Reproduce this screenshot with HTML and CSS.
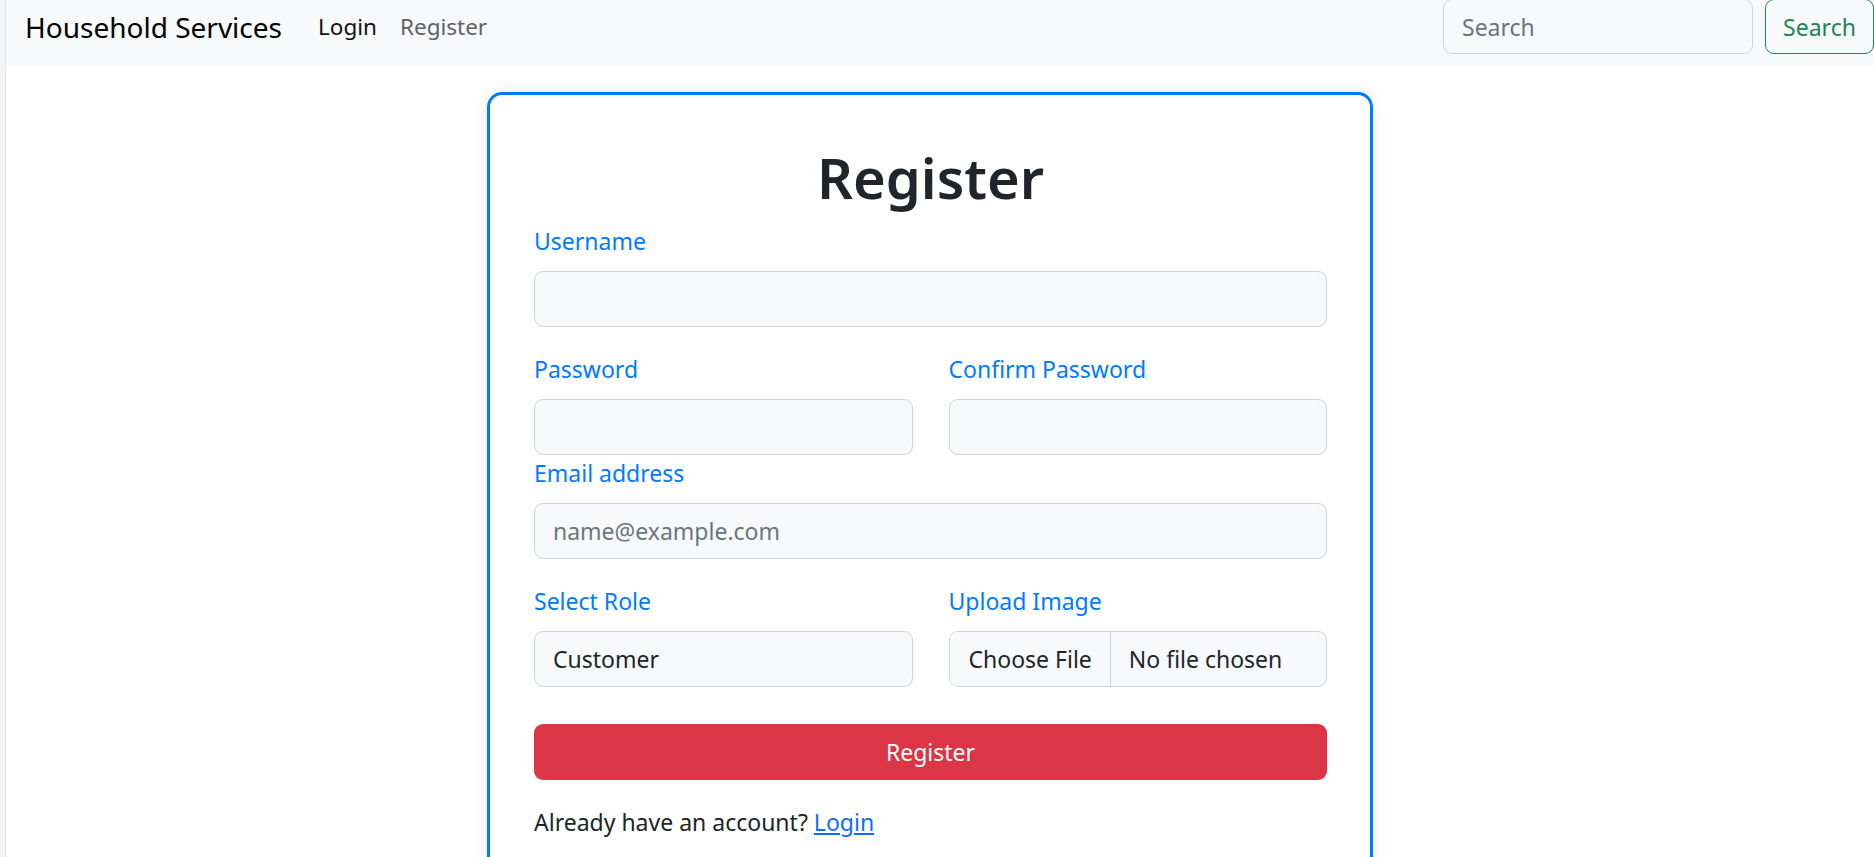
FILE: index.html
```html
<!DOCTYPE html>
<html lang="en">
<head>
<meta charset="utf-8">
<title>Register - Household Services</title>
<link rel="stylesheet" href="styles.css">
</head>
<body>
<nav class="navbar">
  <a class="brand" href="#">Household Services</a>
  <ul class="nav">
    <li><a class="nav-link active" href="#">Login</a></li>
    <li><a class="nav-link" href="#">Register</a></li>
  </ul>
  <form class="search">
    <input class="search-input" type="search" placeholder="Search">
    <button class="search-btn" type="button">Search</button>
  </form>
</nav>
<main class="main">
  <section class="card">
    <h1 class="title">Register</h1>
    <div class="group">
      <label class="label" for="username">Username</label>
      <input class="field" id="username" type="text">
    </div>
    <div class="row">
      <div class="col">
        <label class="label" for="password">Password</label>
        <input class="field" id="password" type="password">
      </div>
      <div class="col">
        <label class="label" for="confirm">Confirm Password</label>
        <input class="field" id="confirm" type="password">
      </div>
    </div>
    <div class="group">
      <label class="label" for="email">Email address</label>
      <input class="field" id="email" type="email" placeholder="name@example.com">
    </div>
    <div class="row row-last">
      <div class="col">
        <label class="label" for="role">Select Role</label>
        <select class="field select" id="role">
          <option>Customer</option>
          <option>Professional</option>
        </select>
      </div>
      <div class="col">
        <label class="label" for="image">Upload Image</label>
        <input class="field file" id="image" type="file">
      </div>
    </div>
    <button class="submit" type="button">Register</button>
    <p class="footer-text">Already have an account? <a class="link" href="#">Login</a></p>
  </section>
</main>
</body>
</html>
```
FILE: styles.css
```css
html {
  background: #f3f3f3;
}
body {
  margin: 0 0 0 5px;
  border-left: 1px solid #e3e3e3;
  background: #ffffff;
  min-height: 100vh;
  font-family: "Noto Sans", "Open Sans", sans-serif;
  font-size: 23px;
  line-height: 36px;
  color: #212529;
  overflow: hidden;
}
.navbar {
  display: flex;
  align-items: center;
  height: 53px;
  padding: 0 0 14px 19px;
  background: #f8f9fa;
}
.brand {
  font-size: 28px;
  line-height: 44px;
  color: #000000;
  text-decoration: none;
  margin-right: 24px;
}
.nav {
  display: flex;
  list-style: none;
  margin: 0;
  padding: 0;
  flex: 1;
}
.nav-link {
  display: block;
  padding: 0 11px 0 12px;
  font-size: 22.5px;
  color: #5f6265;
  text-decoration: none;
}
.nav-link.active {
  color: #111111;
}
.search {
  display: flex;
  gap: 12px;
  margin: 0;
}
.search-input {
  box-sizing: border-box;
  width: 310px;
  height: 55px;
  padding: 0 18px;
  border: 1px solid #ced4da;
  border-radius: 9px;
  background: #f8f9fa;
  font: inherit;
  font-size: 23px;
  color: #212529;
}
.search-input::placeholder {
  color: #6c757d;
}
.search-btn {
  box-sizing: border-box;
  width: 109px;
  height: 55px;
  padding: 0;
  border: 1px solid #198754;
  border-radius: 9px;
  background: transparent;
  font: inherit;
  font-size: 23px;
  color: #198754;
}
.main {
  display: flex;
  justify-content: center;
  padding-right: 20px;
  padding-top: 25px;
}
.card {
  box-sizing: border-box;
  width: 886px;
  padding: 48px 43px 40px 44px;
  border: 3px solid #007bff;
  border-radius: 15px;
  background: #fff;
  box-shadow: 0 0 16px rgba(0, 0, 0, 0.09);
}
.title {
  margin: 0 0 12px;
  text-align: center;
  font-size: 56px;
  line-height: 68px;
  font-weight: 600;
  color: #212529;
}
.group {
  margin-bottom: 24px;
}
.label {
  display: block;
  margin-bottom: 12px;
  color: #007bff;
}
.field {
  display: block;
  box-sizing: border-box;
  width: 100%;
  height: 56px;
  margin: 0;
  padding: 0 18px;
  border: 1px solid #ced4da;
  border-radius: 9px;
  background: #f8f9fa;
  font: inherit;
  color: #212529;
}
.field::placeholder {
  color: #6c757d;
}
.select {
  appearance: none;
  -webkit-appearance: none;
}
.file {
  padding: 0 18px 0 0;
  overflow: hidden;
}
.file::file-selector-button {
  height: 56px;
  margin: -1px 18px 0 0;
  padding: 0 18px 0 19px;
  border: 0;
  border-right: 1px solid #ced4da;
  border-radius: 0;
  background: #f8f9fa;
  font: inherit;
  color: #212529;
}
.row {
  display: grid;
  grid-template-columns: 1fr 1fr;
  column-gap: 36px;
}
.row-last {
  margin-bottom: 37px;
}
.submit {
  display: block;
  width: 100%;
  height: 56px;
  margin: 0 0 24px;
  border: 0;
  border-radius: 9px;
  background: #dc3545;
  color: #fff;
  font: inherit;
}
.footer-text {
  margin: 0;
}
.link {
  color: #0d6efd;
  text-decoration: underline;
}
```
